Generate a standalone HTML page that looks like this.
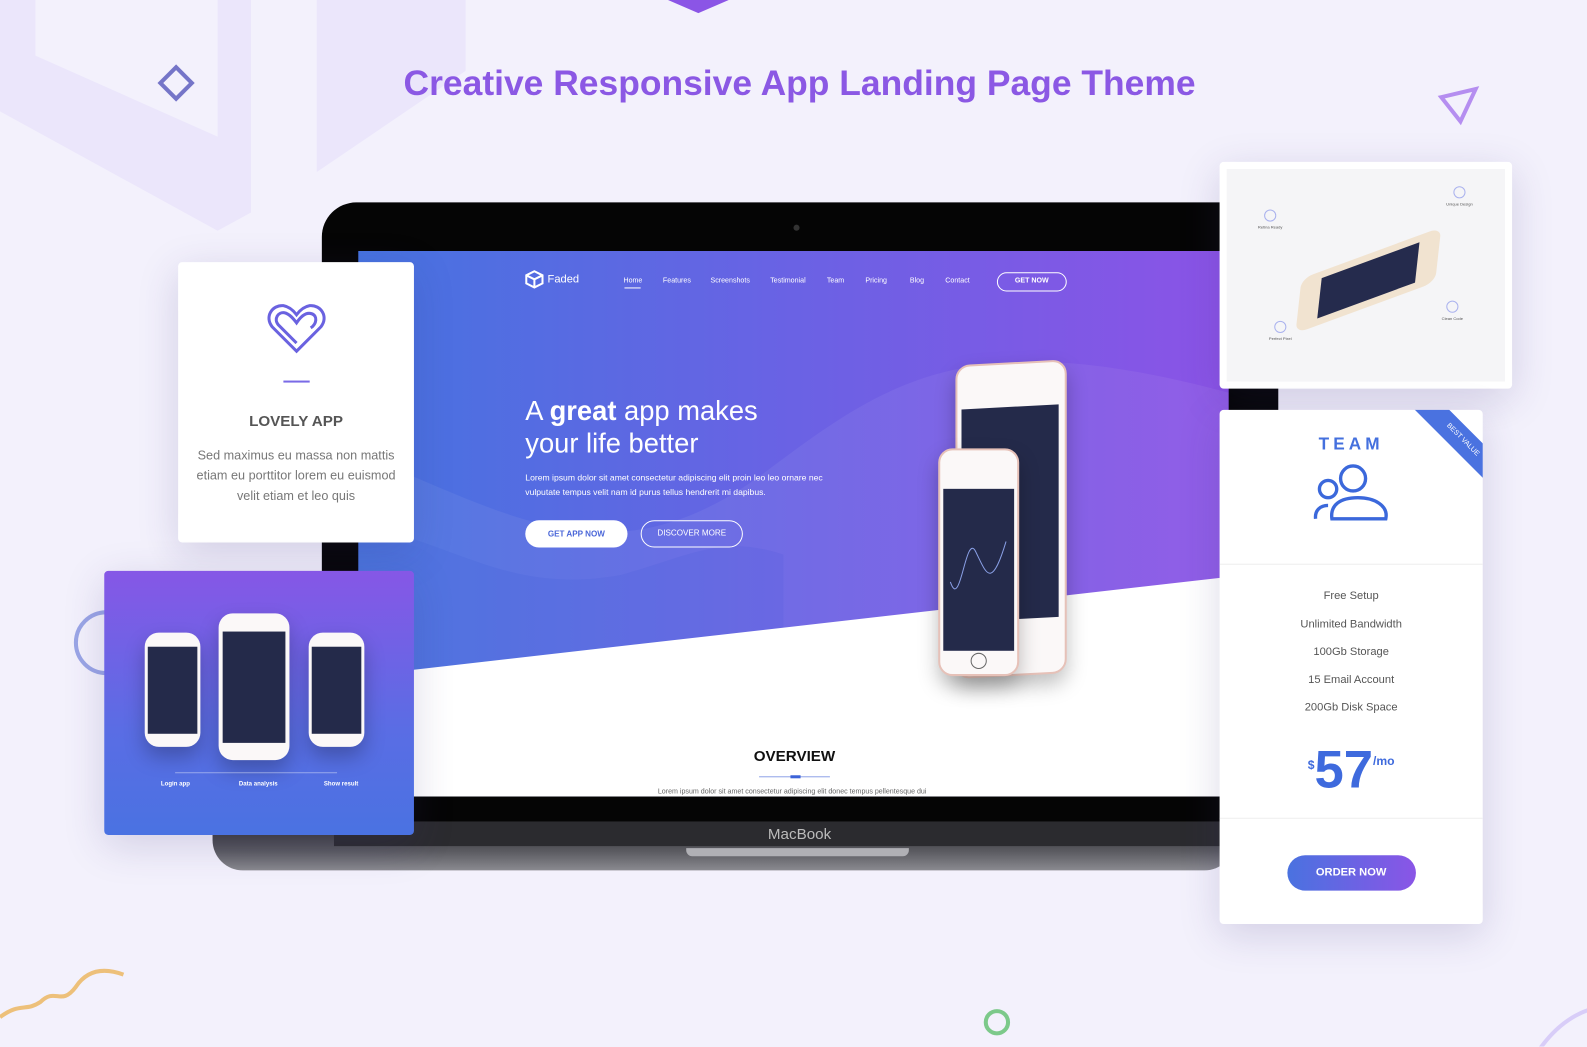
<!DOCTYPE html>
<html><head><meta charset="utf-8"><style>
*{margin:0;padding:0;box-sizing:border-box}
body{width:1587px;height:1046px;overflow:hidden;background:#f3f1fc;font-family:"Liberation Sans",sans-serif;position:relative}
#w{position:absolute;left:0;top:0;width:1568px;height:1034px;transform:scale(1.0121);transform-origin:0 0}
.abs{position:absolute}
.card{position:absolute;background:#fff;border-radius:4px;box-shadow:0 10px 40px rgba(60,50,120,.18)}
.nav span{position:absolute;top:274px;font-size:7px;color:#fff}
.phone{position:absolute;background:#fbf8f8;border-radius:14px;box-shadow:0 10px 20px rgba(0,0,0,.25)}
.phone .scr{position:absolute;background:#242a4a}
.ft{position:absolute;font-size:4px;color:#555;text-align:center;width:70px}
.ft i{display:block;margin:0 auto 3px;width:12px;height:12px;border:1.5px solid #aab2ee;border-radius:50%}
</style></head><body><div id="w">
<svg class="abs" style="left:0;top:0" width="1568" height="1034">
<polygon points="0,0 35,0 35,55 215,135 215,0 248,0 248,210 215,228 0,110" fill="#ebe6fb"/>
<polygon points="313,0 460,0 460,70 313,170" fill="#ebe6fb"/>
<polygon points="660,0 720,0 690,13" fill="#8b55e6"/>
<rect x="163" y="71" width="22" height="22" transform="rotate(45 174 82)" fill="none" stroke="#7575c8" stroke-width="4"/>
<polygon points="1424,96 1458,88 1443,120" fill="none" stroke="#b58ef0" stroke-width="4"/>
<circle cx="105" cy="635" r="30" fill="none" stroke="#9aa5e6" stroke-width="4"/>
<path d="M0,1005 C20,990 25,1000 40,990 C55,975 60,995 75,975 C85,960 100,955 122,963" fill="none" stroke="#edc07a" stroke-width="4"/>
<circle cx="985" cy="1010" r="11" fill="none" stroke="#7cc98a" stroke-width="4"/>
<path d="M1515,1046 C1540,1005 1570,995 1587,995" fill="none" stroke="#d8cdf8" stroke-width="4"/>
</svg>
<div class="abs" style="left:0;top:63px;width:1580px;text-align:center;font-size:35px;font-weight:bold;color:#8b58e4">Creative Responsive App Landing Page Theme</div>

<div class="abs" style="left:210px;top:812px;width:1010px;height:48px;background:linear-gradient(#2a2a2e,#5a5a60 60%,#8a8a90);border-radius:0 0 30px 30px"></div>
<div class="abs" style="left:678px;top:838px;width:220px;height:8px;background:#b0b0b5;border-radius:0 0 6px 6px"></div>
<div class="abs" style="left:318px;top:200px;width:945px;height:612px;background:#050505;border-radius:34px 34px 0 0"></div>
<div class="abs" style="left:330px;top:812px;width:920px;height:24px;background:#2b2b2f;color:#bbb;font-size:15px;text-align:center;line-height:26px">MacBook</div>
<div class="abs" style="left:784px;top:222px;width:6px;height:6px;border-radius:50%;background:#333"></div>
<div class="abs" style="left:354px;top:248px;width:860px;height:539px;overflow:hidden;background:linear-gradient(90deg,#4673e0,#6a62e4 50%,#8b53e6)">
<svg class="abs" style="left:0;top:0" width="860" height="539">
<path d="M0,200 C150,260 250,330 400,220 C520,130 600,70 860,140 L860,539 L0,539Z" fill="rgba(255,255,255,.06)"/>
<path d="M0,270 C100,290 150,340 260,320 C330,300 360,280 420,300 L420,539 L0,539Z" fill="rgba(30,60,200,.08)"/>
<polygon points="0,420 860,322 860,539 0,539" fill="#fff"/>
</svg>
<div class="abs" style="left:386px;top:491px;width:90px;text-align:center;font-size:15px;font-weight:bold;color:#111">OVERVIEW</div>
<div class="abs" style="left:396px;top:519px;width:70px;height:1px;background:#8fa2e8"></div>
<div class="abs" style="left:427px;top:518px;width:10px;height:3px;background:#3c63d8"></div>
<div class="abs" style="left:296px;top:531px;width:290px;font-size:7px;color:#666;white-space:nowrap">Lorem ipsum dolor sit amet consectetur adipiscing elit donec tempus pellentesque dui</div>
</div>
<svg class="abs" style="left:518px;top:266px" width="20" height="20"><path d="M10,2 L18,6 L18,14 L10,18 L2,14 L2,6Z M2,6 L10,10 L18,6 M10,10 L10,18" fill="none" stroke="#fff" stroke-width="2"/></svg>
<div class="abs" style="left:541px;top:270px;color:#fff;font-size:11px">Faded</div>
<div class="nav"><span style="left:616px">Home</span><span style="left:655px">Features</span><span style="left:702px">Screenshots</span><span style="left:761px">Testimonial</span><span style="left:817px">Team</span><span style="left:855px">Pricing</span><span style="left:899px">Blog</span><span style="left:934px">Contact</span></div>
<div class="abs" style="left:617px;top:284px;width:16px;height:1px;background:#fff"></div>
<div class="abs" style="left:985px;top:269px;width:69px;height:19px;border:1.5px solid #fff;border-radius:10px;color:#fff;font-size:7px;font-weight:bold;text-align:center;line-height:16px">GET NOW</div>
<div class="abs" style="left:519px;top:390px;color:#fff;font-size:27px;line-height:32px">A <b>great</b> app makes<br>your life better</div>
<div class="abs" style="left:519px;top:465px;color:#fff;font-size:8.5px;line-height:14px">Lorem ipsum dolor sit amet consectetur adipiscing elit proin leo leo ornare nec<br>vulputate tempus velit nam id purus tellus hendrerit mi dapibus.</div>
<div class="abs" style="left:519px;top:514px;width:101px;height:27px;background:#fff;border-radius:14px;color:#4a66d8;font-size:8px;font-weight:bold;text-align:center;line-height:27px">GET APP NOW</div>
<div class="abs" style="left:633px;top:514px;width:101px;height:27px;border:1.5px solid #fff;border-radius:14px;color:#fff;font-size:8px;text-align:center;line-height:24px">DISCOVER MORE</div>
<div class="phone" style="left:944px;top:358px;width:110px;height:310px;border:2px solid #e6c1b8;transform:skewY(-3deg)"><div class="scr" style="left:4px;top:42px;width:96px;height:210px"></div></div>
<div class="phone" style="left:927px;top:443px;width:80px;height:225px;border:2px solid #e6c1b8"><div class="scr" style="left:3px;top:38px;width:70px;height:160px"></div>
<svg class="abs" style="left:5px;top:80px" width="66" height="70"><path d="M5,50 C15,80 20,0 30,20 C40,40 45,60 60,10" fill="none" stroke="#8aa0e6" stroke-width="1"/></svg>
<div class="abs" style="left:30px;top:200px;width:16px;height:16px;border:1px solid #666;border-radius:50%"></div></div>

<div class="card" style="left:176px;top:259px;width:233px;height:277px;text-align:center">
<svg style="margin-top:40px" width="60" height="52" viewBox="0 0 60 52"><path d="M30,48 L6,24 C-2,14 6,2 17,3 C23,4 27,8 30,12 C33,8 37,4 43,3 C54,2 62,14 54,24 Z M30,40 L12,22 C7,16 12,9 18,10 C23,11 27,16 30,20 C34,14 39,9 45,11 C51,13 50,21 44,25" fill="none" stroke="#6a62e0" stroke-width="3"/></svg>
<div style="width:26px;height:2px;background:#7a6ae6;margin:20px auto 0"></div>
<div style="margin-top:30px;font-size:15px;font-weight:bold;color:#555">LOVELY APP</div>
<div style="margin-top:15px;font-size:12.5px;color:#777;line-height:20px">Sed maximus eu massa non mattis<br>etiam eu porttitor lorem eu euismod<br>velit etiam et leo quis</div>
</div>
<div class="card" style="left:103px;top:564px;width:306px;height:261px;background:linear-gradient(#8657e6,#5a6de4 60%,#4a72e2)">
<div class="phone" style="left:40px;top:61px;width:55px;height:113px"><div class="scr" style="left:3px;top:14px;width:49px;height:86px"></div></div>
<div class="phone" style="left:113px;top:42px;width:70px;height:145px"><div class="scr" style="left:4px;top:18px;width:62px;height:110px"></div></div>
<div class="phone" style="left:202px;top:61px;width:55px;height:113px"><div class="scr" style="left:3px;top:14px;width:49px;height:86px"></div></div>
<div class="abs" style="left:70px;top:199px;width:160px;height:1px;background:rgba(255,255,255,.4)"></div>
<div class="abs" style="left:56px;top:208px;font-size:6px;color:#fff;font-weight:bold">Login app</div>
<div class="abs" style="left:133px;top:208px;font-size:6px;color:#fff;font-weight:bold">Data analysis</div>
<div class="abs" style="left:217px;top:208px;font-size:6px;color:#fff;font-weight:bold">Show result</div>
</div>
<div class="card" style="left:1205px;top:160px;width:289px;height:224px;padding:7px">
<div style="width:100%;height:100%;background:#f5f5f7;position:relative">
<div class="abs" style="left:80px;top:80px;width:120px;height:60px;background:#f1e3d0;border-radius:10px;transform:skewX(-30deg) rotate(-25deg)"><div style="margin:8px 18px;height:44px;background:#252b4d"></div></div>
<div class="ft" style="left:8px;top:40px"><i></i>Retina Ready</div>
<div class="ft" style="left:195px;top:17px"><i></i>Unique Design</div>
<div class="ft" style="left:18px;top:150px"><i></i>Perfect Pixel</div>
<div class="ft" style="left:188px;top:130px"><i></i>Clean Code</div>
</div></div>
<div class="card" style="left:1205px;top:405px;width:260px;height:508px;overflow:hidden;text-align:center">
<div class="abs" style="left:175px;top:18px;width:130px;height:24px;background:#4a72e0;transform:rotate(45deg);color:#fff;font-size:7px;line-height:24px">BEST VALUE</div>
<div style="margin-top:24px;font-size:17px;font-weight:bold;color:#4470de;letter-spacing:4px">TEAM</div>
<svg style="margin-top:8px" width="76" height="60" viewBox="0 0 80 62"><circle cx="16" cy="27" r="9" fill="none" stroke="#3b68db" stroke-width="3.5"/><circle cx="42" cy="16" r="13" fill="none" stroke="#3b68db" stroke-width="3.5"/><path d="M3,58 C2,49 8,44 16,44 M20,58 L76,58 C79,44 64,36 47,36 C28,36 18,44 20,58Z" fill="none" stroke="#3b68db" stroke-width="3.5"/></svg>
<div style="margin-top:35px;border-top:1px solid #eee"></div>
<div style="margin-top:18px;font-size:11px;color:#555;line-height:27.5px">Free Setup<br>Unlimited Bandwidth<br>100Gb Storage<br>15 Email Account<br>200Gb Disk Space</div>
<div style="margin-top:17px;color:#3e6add;font-weight:bold;height:60px"><span style="font-size:12px;vertical-align:18px">$</span><span style="font-size:52px">57</span><span style="font-size:12px;vertical-align:22px">/mo</span></div>
<div style="margin-top:17px;border-top:1px solid #eee"></div>
<div style="margin:36px auto 0;width:127px;height:35px;border-radius:18px;background:linear-gradient(90deg,#4a72e0,#8a55e6);color:#fff;font-size:11px;font-weight:bold;line-height:35px">ORDER NOW</div>
</div>
</div></body></html>
